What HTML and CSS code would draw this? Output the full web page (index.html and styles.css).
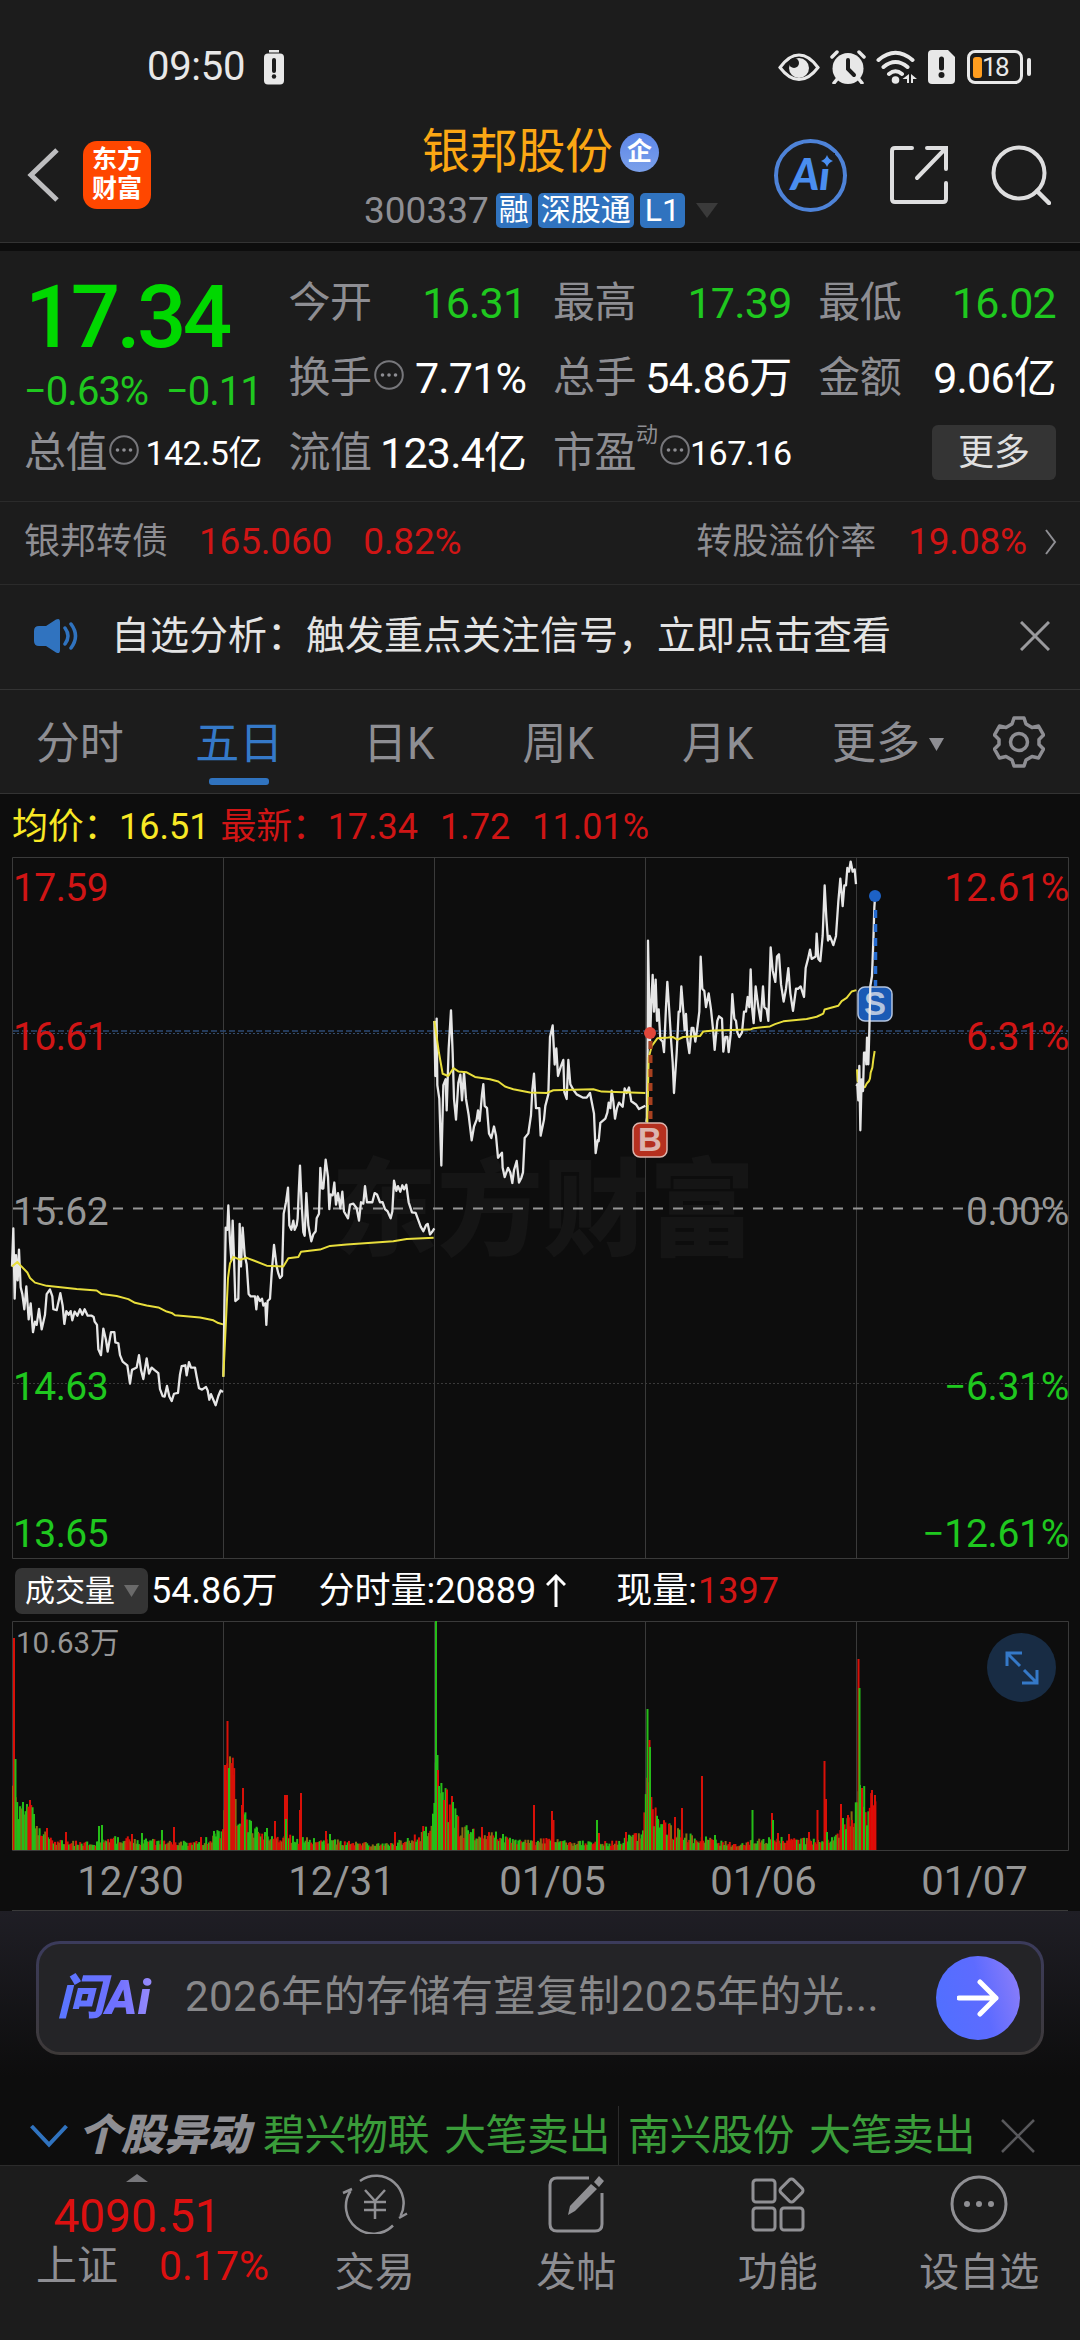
FILE: index.html
```
<!DOCTYPE html>
<html lang="zh-CN">
<head>
  <meta charset="UTF-8">
  <meta name="viewport" content="width=device-width, initial-scale=1.0">
  <title>银邦股份 300337</title>
  <link rel="stylesheet" href="styles.css">
</head>
<body>

  <header class="top">
    <div class="status-bar">
      <div class="status-left">
        <span class="clock">09:50</span>
        <svg width="20" height="35" viewBox="0 0 20 35">
          <rect x="5" y="0" width="10" height="2.5" fill="#e8e8e8"/>
          <rect x="0" y="3.5" width="20" height="31" rx="4" fill="#e8e8e8"/>
          <path d="M10 10v11" stroke="#1c1c1c" stroke-width="4" stroke-linecap="round"/>
          <circle cx="10" cy="26.5" r="2.2" fill="#1c1c1c"/>
        </svg>
      </div>
      <div class="status-right">
        <svg width="42" height="34" viewBox="0 0 42 34">
          <path d="M2 17.500Q11 5 21 5T40 17.500Q31 29.500 21 29.500T2 17.500Z" fill="none" stroke="#e8e8e8" stroke-width="3"/>
          <circle cx="21" cy="18" r="10" fill="#e8e8e8"/>
          <circle cx="16" cy="13" r="5" fill="#1c1c1c"/>
        </svg>
        <svg width="36" height="34" viewBox="0 0 36 34">
          <circle cx="18" cy="18.500" r="15.500" fill="#e8e8e8"/>
          <path d="M2 7l5-5M34 7l-5-5M4 33l4-5M32 33l-4-5" stroke="#e8e8e8" stroke-width="3.500" stroke-linecap="round"/>
          <path d="M18 10v9l6 6" fill="none" stroke="#1c1c1c" stroke-width="4" stroke-linecap="round"/>
        </svg>
        <svg width="42" height="34" viewBox="0 0 42 34">
          <path d="M2.500 10Q19.500-4.500 36.500 10M7.500 17Q19.500 7 31.500 17M13 24Q19.500 18.500 26 24" fill="none" stroke="#e8e8e8" stroke-width="4" stroke-linecap="round"/>
          <circle cx="19.500" cy="30" r="3.800" fill="#e8e8e8"/>
          <path d="M33 24v9h-2v-4h-4.500zM35 24l6 5h-4v4h-2z" fill="#e8e8e8"/>
        </svg>
        <svg width="27" height="34" viewBox="0 0 27 34">
          <path d="M4 0h16l7 7v23q0 4-4 4H4q-4 0-4-4V4q0-4 4-4z" fill="#e8e8e8"/>
          <path d="M13.500 9v9" stroke="#1c1c1c" stroke-width="5" stroke-linecap="round"/>
          <circle cx="13.500" cy="25" r="3" fill="#1c1c1c"/>
        </svg>
        <div class="battery"><i></i><span>18</span></div>
      </div>
    </div>

    <div class="nav-bar">
      <div class="nav-left">
        <svg width="34" height="56" viewBox="0 0 34 56">
          <path d="M32 3L6 28L32 53" fill="none" stroke="#bdbdbf" stroke-width="5"/>
        </svg>
        <div class="app-logo">东方<br>财富</div>
      </div>
      <div class="nav-title">
        <div class="stock-name">银邦股份<span class="corp">企</span></div>
        <div class="stock-code">
          <span class="code">300337</span>
          <span class="tag">融</span>
          <span class="tag">深股通</span>
          <span class="tag">L1</span>
          <svg width="22" height="15" viewBox="0 0 22 15"><path d="M0 0h22L11 15z" fill="#3a3a3a"/></svg>
        </div>
      </div>
      <div class="nav-right">
        <div class="ai-btn">Ai
          <svg width="12" height="12" viewBox="0 0 12 12"><path d="M6 0Q7.500 4.500 12 6Q7.500 7.500 6 12Q4.500 7.500 0 6Q4.500 4.500 6 0z" fill="#4a8ef0"/></svg>
        </div>
        <svg width="58" height="58" viewBox="0 0 58 58">
          <path d="M22 2H5Q2 2 2 5v48q0 3 3 3h48q3 0 3-3V37M37 2h19v21M55 3L27 32" fill="none" stroke="#dededf" stroke-width="4" stroke-linecap="round"/>
        </svg>
        <svg width="60" height="60" viewBox="0 0 60 60">
          <circle cx="28" cy="28" r="25.500" fill="none" stroke="#dededf" stroke-width="4"/>
          <path d="M46 46l12 12" stroke="#dededf" stroke-width="4.500" stroke-linecap="round"/>
        </svg>
      </div>
    </div>
  </header>

  <section class="quote">
    <div class="price-block">
      <div class="price">17.34</div>
      <div class="change"><span>−0.63%</span><span>−0.11</span></div>
    </div>
    <div class="cell"><label>今开</label><b class="green">16.31</b></div>
    <div class="cell"><label>最高</label><b class="green">17.39</b></div>
    <div class="cell"><label>最低</label><b class="green">16.02</b></div>
    <div class="cell"><label>换手</label><svg class="dots" width="30" height="30" viewBox="0 0 30 30"><use href="#dots"/></svg><b>7.71%</b></div>
    <div class="cell"><label>总手</label><b>54.86万</b></div>
    <div class="cell"><label>金额</label><b>9.06亿</b></div>
    <div class="cell"><label>总值</label><svg class="dots" width="30" height="30" viewBox="0 0 30 30"><use href="#dots"/></svg><b class="small">142.5亿</b></div>
    <div class="cell"><label>流值</label><b>123.4亿</b></div>
    <div class="cell"><label>市盈</label><sup>动</sup><svg class="dots" width="30" height="30" viewBox="0 0 30 30">
      <g id="dots">
        <circle cx="15" cy="15" r="13.800" fill="none" stroke="#77777b" stroke-width="2"/>
        <g fill="#8e8e93"><circle cx="8.500" cy="15" r="1.800"/><circle cx="15" cy="15" r="1.800"/><circle cx="21.500" cy="15" r="1.800"/></g>
      </g>
    </svg><b class="small">167.16</b></div>
    <div class="cell"><button class="more-btn">更多</button></div>
  </section>

  <section class="bond">
    <span class="bond-name">银邦转债</span>
    <span class="red bond-price">165.060</span>
    <span class="red">0.82%</span>
    <span class="premium">转股溢价率</span>
    <span class="red bond-rate">19.08%</span>
    <svg width="13" height="26" viewBox="0 0 13 26"><path d="M2 1l9 12L2 25" fill="none" stroke="#8e8e93" stroke-width="2"/></svg>
  </section>

  <section class="notice">
    <svg width="46" height="36" viewBox="0 0 46 36">
      <path d="M5 8h7L22 1.500Q26-.5 26 4v28q0 4.500-4 2.500L12 28H5q-5 0-5-5V13q0-5 5-5z" fill="#3073bf"/>
      <path d="M31 10q6 8 0 16M37 6q9 12 0 24" fill="none" stroke="#3073bf" stroke-width="3.500" stroke-linecap="round"/>
    </svg>
    <span class="notice-text">自选分析：触发重点关注信号，立即点击查看</span>
    <svg width="30" height="30" viewBox="0 0 30 30"><path d="M1 1l28 28M29 1L1 29" stroke="#9a9a9d" stroke-width="3"/></svg>
  </section>

  <nav class="tabs">
    <div class="tab">分时</div>
    <div class="tab active">五日</div>
    <div class="tab">日K</div>
    <div class="tab">周K</div>
    <div class="tab">月K</div>
    <div class="tab tab-more">更多<svg width="15" height="13" viewBox="0 0 15 13"><path d="M0 0h15L7.500 13z" fill="#8e8e93"/></svg></div>
    <div class="gear">
      <svg width="52" height="52" viewBox="0 0 52 52">
        <path d="M21 2h10l2 6l6 3.500l6.500-1.500l5 9l-4.500 4.500v5l4.500 4.500l-5 9l-6.500-1.500l-6 3.500l-2 6H21l-2-6l-6-3.500L6.500 42l-5-9L6 28.500v-5L1.500 19l5-9l6.500 1.500L19 8z" fill="none" stroke="#8e8e93" stroke-width="3.500" stroke-linejoin="round"/>
        <circle cx="26" cy="26" r="8.500" fill="none" stroke="#8e8e93" stroke-width="3.500"/>
      </svg>
    </div>
  </nav>

  <section class="avg-row">
    <span class="yellow avg-label">均价：</span><span class="yellow avg-val">16.51</span>
    <span class="red avg-label">最新：</span><span class="red now-val">17.34</span>
    <span class="red now-val">1.72</span><span class="red">11.01%</span>
  </section>

  <section class="chart">
    <svg class="price-chart" width="1080" height="702" viewBox="0 856 1080 702">
      <text class="watermark" x="543" y="1246" text-anchor="middle">东方财富</text>
      <path class="grid" d="M12.500 856.500H1068.500V1557.500H12.500zM223.500 857V1557M434.500 857V1557M645.500 857V1557M856.500 857V1557"/>
      <path d="M13 1382.500H1068" stroke="#3a3a3a" stroke-dasharray="2 2"/>
      <path d="M13 1030H1068" stroke="#2c4a73" stroke-width="1.600" stroke-dasharray="6 3"/>
      <path d="M13 1032.500H1068" stroke="#344d6c" stroke-dasharray="2 2"/>
      <path d="M13 1207.500H1068" stroke="#969696" stroke-width="2" stroke-dasharray="10 10"/>

      <!-- axis values -->
      <g class="axis">
        <text class="red-fill" x="13" y="899.500">17.59</text>
        <text class="red-fill" x="13" y="1048.500">16.61</text>
        <text class="grey-fill" x="13" y="1223.500">15.62</text>
        <text class="green-fill" x="13" y="1398.500">14.63</text>
        <text class="green-fill" x="13" y="1546">13.65</text>
      </g>
      <g class="axis axis-right" text-anchor="end">
        <text class="red-fill" x="1069" y="899.500">12.61%</text>
        <text class="red-fill" x="1069" y="1048.500">6.31%</text>
        <text class="grey-fill" x="1069" y="1223.500">0.00%</text>
        <text class="green-fill" x="1069" y="1398.500">−6.31%</text>
        <text class="green-fill" x="1069" y="1546">−12.61%</text>
      </g>

      <!-- 12/30, 12/31 -->
      <g transform="translate(0 850) scale(.33333 .45918)">
        <polyline class="line" points="36,905 40,822 44,975 48,880 53,935 57,868 62,950 67,965 73,998 79,948 86,1020 92,985 99,1048 105,1025 110,1032 117,997 125,1042 135,1010 140,965 150,955 157,970 160,998 170,1000 181,963 188,990 193,1030 199,1002 206,1010 212,1002 217,1022 224,1003 232,1012 240,998 247,1010 254,998 263,1012 275,1012 281,1015 284,1025 291,1032 295,1085 303,1098 310,1040 318,1065 323,1090 333,1048 343,1048 346,1070 355,1072 360,1098 368,1112 382,1120 390,1160 396,1130 410,1125 417,1098 423,1130 430,1150 440,1105 447,1138 455,1125 463,1130 475,1137 480,1172 488,1187 494,1188 501,1165 508,1188 515,1198 522,1182 534,1180 540,1140 545,1122 556,1120 560,1142 567,1113 573,1125 585,1125 590,1145 597,1170 606,1173 618,1167 623,1175 628,1195 633,1183 647,1207 655,1187 662,1175 669,1178"/>
        <polyline class="avg" points="36,905 52,895 62,903 82,918 90,930 105,940 140,947 230,954 290,957 305,965 350,969 385,976 405,984 440,990 475,994 500,1003 515,1006 525,1011 600,1016 640,1022 655,1028 669,1031"/>
        <polyline class="line" points="670,1145 677,820 682,825 685,772 690,850 694,890 698,805 702,885 706,980 715,975 719,812 723,905 728,820 734,880 740,900 746,965 752,970 765,970 769,998 773,970 780,980 786,975 790,990 796,985 799,1032 803,980 810,975 815,920 822,858 830,905 835,920 840,930 846,925 851,790 858,765 864,733 868,815 874,825 880,805 884,825 890,815 893,800 897,730 900,685 905,770 910,830 914,838 919,745 925,815 930,835 934,850 940,835 947,828 950,800 957,790 961,690 966,735 970,735 977,672 984,710 988,780 992,748 998,750 1003,722 1008,770 1014,745 1021,778 1027,742 1032,785 1044,800 1050,770 1060,768 1070,778 1077,805 1083,765 1090,768 1095,730 1101,765 1117,765 1124,745 1131,748 1140,765 1148,765 1155,780 1163,785 1172,800 1177,785 1182,718 1189,740 1194,730 1201,742 1207,728 1212,737 1219,727 1226,765 1236,787 1247,788 1253,800 1262,818 1270,828 1278,815 1283,812 1290,835 1296,830 1303,822"/>
        <polyline class="avg" points="670,1145 684,930 690,898 700,884 720,890 740,886 765,893 800,903 850,905 865,887 895,884 903,873 960,868 990,860 1040,857 1180,850 1220,845 1301,842"/>
      </g>

      <!-- 01/05, 01/06 -->
      <g transform="translate(420 850) scale(.33333 .45918)">
        <polyline class="line" points="43,370 46,490 50,365 52,510 58,540 64,685 70,510 77,497 80,565 86,430 93,347 98,440 102,540 108,585 115,505 121,487 126,543 132,482 138,540 146,575 155,630 162,600 170,585 174,565 179,588 186,530 190,508 194,555 201,560 207,615 214,625 222,600 228,620 234,668 246,657 248,690 254,710 264,690 271,700 277,723 282,695 290,675 297,722 304,712 309,700 314,625 325,615 333,575 337,520 342,485 348,560 358,560 362,620 372,585 376,555 385,530 390,405 398,380 404,465 409,430 414,490 422,470 430,455 433,525 440,540 445,455 451,508 460,520 470,530 488,537 500,537 510,527 522,572 527,658 533,630 536,632 541,592 556,583 562,570 566,548 571,560 575,522 580,545 585,583 591,560 597,548 608,557 614,517 620,527 627,515 634,545 648,552 657,562 676,555"/>
        <polyline class="avg" points="43,370 57,440 68,485 85,490 100,473 115,480 140,482 165,492 210,497 235,502 255,513 280,519 330,526 380,527 400,521 520,519 545,524 676,527"/>
        <polyline class="line" points="679,590 681,580 683,430 684,195 690,415 694,330 698,270 702,350 707,280 711,370 716,345 721,410 728,415 732,438 738,340 742,285 748,350 754,420 758,460 762,527 770,440 776,350 780,350 784,295 790,350 794,390 798,355 802,410 808,440 815,385 820,385 826,415 832,385 838,350 842,230 847,300 853,305 858,340 866,310 873,345 880,395 884,433 892,370 897,360 906,365 910,437 916,405 922,405 926,438 932,400 937,312 943,365 948,370 952,395 958,405 966,395 972,350 978,350 983,318 988,340 992,258 996,340 1001,375 1007,295 1015,340 1022,370 1029,295 1033,340 1040,345 1045,370 1052,210 1058,260 1066,285 1071,230 1077,225 1083,290 1091,328 1098,300 1105,255 1111,310 1119,348 1128,300 1134,300 1142,295 1152,318 1157,255 1164,235 1170,215 1175,235 1187,230 1190,180 1195,235 1201,240 1208,185 1214,75 1219,145 1224,195 1229,185 1235,195 1240,205 1248,185 1255,110 1261,60 1268,120 1273,75 1278,75 1282,37 1287,45 1292,23 1298,45 1304,40 1308,72"/>
        <polyline class="avg" points="681,625 686,450 695,425 712,408 745,406 758,405 772,411 790,405 840,403 850,393 880,391 990,389 1000,386 1050,382 1065,377 1090,371 1160,366 1190,361 1210,354 1214,345 1255,337 1265,327 1280,320 1295,306 1309,303"/>
      </g>

      <!-- buy / sell marks -->
      <path d="M650.500 1040V1122" stroke="#a8401f" stroke-width="4" stroke-dasharray="8 6"/>
      <circle cx="650" cy="1032" r="6" fill="#e0473a"/>
      <rect x="633" y="1122" width="34" height="34" rx="7" fill="#b5301f" stroke="#dcb5ae" stroke-width="1.500"/>
      <text class="mark" x="650" y="1150" text-anchor="middle" fill="#dcb5ae">B</text>

      <rect x="858" y="986" width="34" height="34" rx="7" fill="#1b5ab5" stroke="#b4c4de" stroke-width="1.500"/>
      <text class="mark" x="875" y="1014" text-anchor="middle" fill="#b4c4de">S</text>

      <!-- 01/07 -->
      <g transform="translate(840 850) scale(.33333)">
        <polyline class="avg" points="51,655 53,690 66,710 75,708 80,698 87,690 90,682 92,665 97,650 100,625 104,600"/>
        <polyline class="line" points="49,705 52,700 55,748 58,645 61,838 65,685 69,720 72,605 77,605 79,640 81,560 85,640 88,540 91,405 96,375 100,270 103,170 105,140"/>
      </g>
      <path d="M875.500 909V985" stroke="#256bd0" stroke-width="3.500" stroke-dasharray="8 6"/>
      <circle cx="875" cy="895" r="6" fill="#1d62c6"/>
    </svg>

    <div class="vol-head">
      <span class="vol-select">成交量<svg width="15" height="12" viewBox="0 0 15 12"><path d="M0 0h15L7.500 12z" fill="#6a6a6a"/></svg></span>
      <span class="vol-total">54.86万</span>
      <span class="vol-min">分时量:20889</span>
      <svg class="vol-arrow" width="20" height="34" viewBox="0 0 20 34"><path d="M10 33V2M1 11l9-9l9 9" fill="none" stroke="#fff" stroke-width="3"/></svg>
      <span>现量:</span><span class="red vol-now">1397</span>
    </div>

    <div class="vol-box">
      <svg id="volume" width="1080" height="232" viewBox="0 1619 1080 232">
        <path class="grid" d="M12.500 1620.500H1068.500V1849.500H12.500zM223.500 1620V1849M434.500 1620V1849M645.500 1620V1849M856.500 1620V1849"/>
        <text class="vol-max" x="16" y="1652">10.63万</text>
      </svg>
      <div class="expand">
        <svg width="34" height="34" viewBox="0 0 34 34">
          <path d="M2 15V2h15M2 2l13 13M32 19v13H17M32 32L19 19" fill="none" stroke="#3579c8" stroke-width="3"/>
        </svg>
      </div>
    </div>

    <div class="dates">
      <span>12/30</span><span>12/31</span><span>01/05</span><span>01/06</span><span>01/07</span>
    </div>
  </section>

  <section class="ask">
    <div class="ask-card">
      <div class="ask-inner">
        <span class="ask-logo">问Ai</span>
        <span class="ask-text">2026年的存储有望复制2025年的光...</span>
        <span class="ask-go">
          <svg width="42" height="38" viewBox="0 0 42 38"><path d="M2 19h37M23 3l16 16l-16 16" fill="none" stroke="#fff" stroke-width="5" stroke-linecap="round" stroke-linejoin="round"/></svg>
        </span>
      </div>
    </div>
  </section>

  <section class="ticker">
    <svg class="ticker-open" width="38" height="24" viewBox="0 0 38 24"><path d="M1.500 2L19 20.500L36.500 2" fill="none" stroke="#3073bf" stroke-width="4"/></svg>
    <span class="ticker-name">个股异动</span>
    <span class="ticker-item"><span>碧兴物联</span><span>大笔卖出</span></span>
    <span class="ticker-item"><span>南兴股份</span><span>大笔卖出</span></span>
    <svg width="34" height="34" viewBox="0 0 34 34"><path d="M1 1l32 32M33 1L1 33" stroke="#58585b" stroke-width="2.500"/></svg>
  </section>

  <footer class="bottom">
    <div class="index">
      <svg width="22" height="8" viewBox="0 0 22 8"><path d="M0 8L11 0l11 8z" fill="#77777b"/></svg>
      <div class="index-value">4090.51</div>
      <div class="index-row"><span>上证</span><span class="index-pct">0.17%</span></div>
    </div>
    <div class="item">
      <svg width="66" height="60" viewBox="0 0 66 60">
        <path d="M18 7A27.500 27.500 0 0 1 58.500 42M51 51.500A27.500 27.500 0 0 1 8.500 17M1 19l9-4M65 39.500l-8 4.500" fill="none" stroke="#909094" stroke-width="2.500"/>
        <path d="M23 16l10 11l10-11M33 27v18M22 28h22M22 36h22" fill="none" stroke="#909094" stroke-width="2.500"/>
      </svg>
      <span>交易</span>
    </div>
    <div class="item">
      <svg width="56" height="60" viewBox="0 0 56 60">
        <path d="M41 4H9Q2 4 2 11v39q0 7 7 7h38q7 0 7-7V19" fill="none" stroke="#909094" stroke-width="3"/>
        <path d="M20 41l2-9L43 10l6 5L27 37zM46 8l5-6l5 5l-5 6z" fill="#909094"/>
      </svg>
      <span>发帖</span>
    </div>
    <div class="item">
      <svg width="56" height="60" viewBox="0 0 56 60">
        <g fill="none" stroke="#909094" stroke-width="3">
          <rect x="3" y="6" width="22" height="22" rx="3"/>
          <rect x="3" y="34" width="22" height="22" rx="3"/>
          <rect x="31" y="34" width="22" height="22" rx="3"/>
          <rect x="32.500" y="7.500" width="18" height="18" rx="3" transform="rotate(45 41.500 16.500)"/>
        </g>
      </svg>
      <span>功能</span>
    </div>
    <div class="item">
      <svg width="60" height="60" viewBox="0 0 60 60">
        <circle cx="30" cy="30" r="27" fill="none" stroke="#909094" stroke-width="3"/>
        <g fill="#909094"><circle cx="18" cy="30" r="3"/><circle cx="30" cy="30" r="3"/><circle cx="42" cy="30" r="3"/></g>
      </svg>
      <span>设自选</span>
    </div>
  </footer>

  <script src="volume.js"></script>
</body>
</html>
```

FILE: styles.css
```
* {
  box-sizing: border-box;
}

body {
  margin: 0;
  width: 1080px;
  height: 2340px;
  overflow: hidden;
  background-color: #0d0d0d;
  color: #fff;
  font-family: Roboto, "Noto Sans CJK SC", sans-serif;
  display: flex;
  flex-direction: column;
}

svg {
  display: block;
  flex-shrink: 0;
}

section, nav, footer, header {
  flex-shrink: 0;
}

.red { color: #d01515; }
.green { color: #1fc81f; }
.yellow { color: #f8e825; }

/* header */
.top {
  height: 243px;
  background-color: #1c1c1c;
  border-bottom: 1px solid #333;
}

.status-bar {
  height: 108px;
  padding: 26px 49px 0 147px;
  display: flex;
  justify-content: space-between;
  align-items: center;
}

.status-left {
  display: flex;
  align-items: center;
  gap: 19px;
}

.clock {
  font-size: 40px;
  line-height: 40px;
  color: #e8e8e8;
  letter-spacing: -0.3px;
}

.status-right {
  display: flex;
  align-items: center;
  gap: 10px;
}

.battery {
  position: relative;
  width: 56px;
  height: 34px;
  margin: 0 8px 0 2px;
  border: 3px solid #e8e8e8;
  border-radius: 8px;
  display: flex;
  align-items: center;
  padding-left: 3px;
  color: #e8e8e8;
  font-size: 26px;
  line-height: 26px;
  letter-spacing: -1.5px;
}

.battery i {
  width: 9px;
  height: 21px;
  border-radius: 3px;
  background-color: #ff9d1f;
}

.battery::after {
  content: "";
  position: absolute;
  right: -11px;
  top: 5px;
  width: 4px;
  height: 18px;
  border-radius: 2px;
  background-color: #e8e8e8;
}

.nav-bar {
  height: 134px;
  padding: 0 29px 0 25px;
  display: grid;
  grid-template-columns: 339px 1fr 278px;
}

.nav-left {
  display: flex;
  align-items: center;
  gap: 24px;
}

.app-logo {
  width: 68px;
  height: 68px;
  border-radius: 14px;
  background-color: #ff4700;
  font-size: 25px;
  line-height: 29px;
  font-weight: 700;
  text-align: center;
  padding-top: 4px;
}

.nav-title {
  display: flex;
  flex-direction: column;
  padding-top: 14px;
}

.stock-name {
  display: flex;
  align-items: center;
  padding-left: 58px;
  height: 60px;
  gap: 7px;
  font-size: 48px;
  line-height: 60px;
  letter-spacing: -0.3px;
  color: #fba714;
}

.corp {
  width: 39px;
  height: 39px;
  border-radius: 50%;
  background: linear-gradient(#5c86e8, #7ba0ea);
  color: #fff;
  font-size: 25px;
  line-height: 37px;
  font-weight: 700;
  text-align: center;
}

.stock-code {
  display: flex;
  align-items: center;
  height: 56px;
  gap: 6px;
}

.code {
  font-size: 37px;
  color: #8e8e93;
  margin-right: 1px;
}

.tag {
  height: 35px;
  padding: 0 3px;
  border-radius: 5px;
  background-color: #3073bf;
  font-size: 30px;
  line-height: 34px;
}

.tag:nth-of-type(4) {
  padding: 0 5px;
  font-size: 32px;
  margin-right: 5px;
}

.nav-right {
  display: flex;
  align-items: center;
  justify-content: flex-end;
  gap: 43px;
}

.ai-btn {
  position: relative;
  width: 73px;
  height: 73px;
  border: 4px solid #4e83d8;
  border-radius: 50%;
  color: #4a8ef0;
  font-family: Lato, sans-serif;
  font-size: 43px;
  line-height: 62px;
  font-weight: 900;
  font-style: italic;
  text-align: center;
}

.ai-btn svg {
  position: absolute;
  right: 10px;
  top: 12px;
  outline: 2px solid #1c1c1c;
  background-color: #1c1c1c;
}

/* quote */
.quote {
  margin-top: 8px;
  height: 251px;
  padding: 14px 24px 0;
  background-color: #1c1c1c;
  border-bottom: 1px solid #2b2b2b;
  display: grid;
  grid-template-columns: repeat(4, 1fr);
  grid-auto-rows: 75px;
  column-gap: 26.7px;
}

.price-block {
  grid-row: span 2;
}

.price {
  height: 104px;
  padding-left: 1px;
  font-size: 87px;
  line-height: 104px;
  font-weight: 500;
  letter-spacing: -3.7px;
  color: #00d800;
}

.change {
  display: flex;
  justify-content: space-between;
  font-size: 40px;
  line-height: 45px;
  letter-spacing: -1px;
  color: #1fc81f;
}

.cell {
  display: flex;
  align-items: center;
  font-size: 42px;
  line-height: 60px;
  white-space: nowrap;
}

.cell label {
  color: #8e8e93;
  letter-spacing: -0.5px;
}

.cell b {
  margin-left: auto;
  font-weight: 400;
  font-size: 43px;
  letter-spacing: -0.8px;
}

.cell .small {
  font-size: 34px;
  letter-spacing: -0.5px;
}

.cell sup {
  align-self: flex-start;
  font-size: 22px;
  line-height: 40px;
  color: #8e8e93;
}

.dots {
  margin: 0 0 6px 2px;
}

.more-btn {
  margin-left: auto;
  width: 124px;
  height: 55px;
  padding: 0;
  border: none;
  border-radius: 6px;
  background-color: #343434;
  color: #e0e0e0;
  font-family: inherit;
  font-size: 36px;
  line-height: 50px;
}

.bond {
  height: 83px;
  padding: 0 23px 2px 24px;
  background-color: #1c1c1c;
  border-bottom: 1px solid #2b2b2b;
  display: flex;
  align-items: center;
  font-size: 37px;
  line-height: 50px;
  letter-spacing: -0.2px;
}

.bond-name,
.premium {
  color: #8e8e93;
  font-size: 36px;
  letter-spacing: 0;
}

.bond-price {
  margin: 0 31px;
}

.premium {
  margin-left: auto;
}

.bond-rate {
  margin: 0 17px 0 32px;
}

/* notice */
.notice {
  height: 105px;
  padding: 0 30px 2px 34px;
  background-color: #1c1c1c;
  border-bottom: 1px solid #333;
  display: flex;
  align-items: center;
}

.notice-text {
  margin: 0 auto 0 31px;
  font-size: 39px;
  line-height: 54px;
  color: #e4e4e4;
}

/* period tabs */
.tabs {
  height: 104px;
  background-color: #1c1c1c;
  border-bottom: 1px solid #333;
  display: grid;
  grid-template-columns: repeat(6, 159.500px) 1fr;
}

.tab {
  padding-top: 5px;
  font-size: 44px;
  line-height: 98px;
  color: #8e8e93;
  text-align: center;
}

.active {
  position: relative;
  color: #3579c8;
}

.active::after {
  content: "";
  position: absolute;
  left: 49px;
  bottom: 8px;
  width: 60px;
  height: 7px;
  border-radius: 3px;
  background-color: #3073bf;
}

.tab-more {
  display: flex;
  align-items: center;
  justify-content: flex-end;
  padding-right: 13px;
  gap: 9px;
}

.gear {
  display: flex;
  align-items: center;
  justify-content: center;
}

.avg-row {
  height: 63px;
  padding: 2px 0 0 12px;
  display: flex;
  align-items: center;
  font-size: 36px;
  line-height: 50px;
}

.avg-label {
  letter-spacing: -0.3px;
}

.avg-val {
  margin-right: 11px;
}

.now-val {
  margin-right: 22px;
}

/* chart */
.chart {
  height: 1054px;
}

.grid {
  fill: none;
  stroke: #3a3a3a;
  stroke-width: 1;
}

.line,
.avg {
  fill: none;
  stroke: #e6e6e6;
  stroke-width: 2.3;
  stroke-linejoin: round;
  vector-effect: non-scaling-stroke;
}

.avg {
  stroke: #e8de3c;
  stroke-width: 2;
}

.axis text {
  font-size: 39px;
  letter-spacing: -0.6px;
}

.axis-right text {
  letter-spacing: -0.3px;
}

.red-fill { fill: #d01515; }
.green-fill { fill: #1fc81f; }
.grey-fill { fill: #969696; }

.watermark {
  font-family: "Noto Sans CJK SC", sans-serif;
  font-size: 106px;
  font-weight: 900;
  fill: #151515;
}

.mark {
  font-family: "Liberation Sans", sans-serif;
  font-size: 33px;
  font-weight: 700;
}

.vol-head {
  height: 61px;
  padding: 2px 0 0 15px;
  display: flex;
  align-items: center;
  font-size: 36px;
  line-height: 46px;
}

.vol-select {
  width: 133px;
  height: 46px;
  padding-left: 10px;
  border-radius: 7px;
  background-color: #343434;
  font-size: 30px;
  display: flex;
  align-items: center;
  gap: 9px;
}

.vol-total {
  margin: 0 41px 0 3px;
}

.vol-arrow {
  margin: 0 50px 0 10px;
}

.vol-now {
  margin-left: 1px;
}

.vol-box {
  position: relative;
}

.vol-max {
  font-size: 29.500px;
  fill: #969696;
}

.expand {
  position: absolute;
  left: 987px;
  top: 13px;
  width: 69px;
  height: 69px;
  border-radius: 50%;
  background-color: #182c44;
  display: flex;
  align-items: center;
  justify-content: center;
}

.dates {
  margin-left: 12px;
  width: 1056px;
  height: 59px;
  padding-left: 13px;
  border-bottom: 1px solid #3a3a3a;
  display: grid;
  grid-template-columns: repeat(5, 211px);
  font-size: 40px;
  line-height: 60px;
  color: #969696;
  text-align: center;
}

/* ask ai */
.ask {
  height: 195px;
  padding: 30px 36px 0;
  background: linear-gradient(#1f1e25, #0d0d0d 85%);
}

.ask-card {
  height: 114px;
  padding: 3px;
  border-radius: 24px;
  background: linear-gradient(#3b3b5c, #3d3938);
}

.ask-inner {
  height: 108px;
  padding: 0 21px 0 18px;
  border-radius: 21px;
  background-color: #242427;
  display: flex;
  align-items: center;
}

.ask-logo {
  width: 108px;
  font-size: 48px;
  line-height: 60px;
  font-weight: 900;
  font-style: italic;
  letter-spacing: 0.5px;
  background: linear-gradient(90deg, #5876ff, #6f70ff 55%, #a694f8);
  background-clip: text;
  -webkit-background-clip: text;
  color: transparent;
}

.ask-text {
  margin: 0 auto 3px 20px;
  font-size: 42px;
  line-height: 60px;
  letter-spacing: 0.45px;
  color: #88888a;
}

.ask-go {
  width: 84px;
  height: 84px;
  border-radius: 50%;
  background: linear-gradient(75deg, #4f70ff, #5d6bff 55%, #9180f8);
  display: flex;
  align-items: center;
  justify-content: center;
}

/* moving stocks */
.ticker {
  height: 59px;
  padding-left: 30px;
  display: flex;
  align-items: center;
  font-size: 42px;
  line-height: 59px;
  white-space: nowrap;
}

.ticker-name {
  width: 185px;
  margin-left: 10px;
  font-size: 43px;
  font-weight: 900;
  font-style: italic;
  color: #8e8e93;
}

.ticker-item {
  width: 356px;
  height: 59px;
  border-right: 1px solid #2b2b2b;
  display: flex;
  gap: 15px;
  letter-spacing: -0.5px;
  color: #3a9c3a;
}

.ticker-item + .ticker-item {
  width: 382px;
  padding-left: 9px;
  border: none;
}

/* bottom bar */
.bottom {
  height: 176px;
  background-color: #1c1c1c;
  border-top: 1px solid #2b2b2b;
  display: grid;
  grid-template-columns: 274px repeat(4, 201.500px);
}

.index {
  display: flex;
  flex-direction: column;
  align-items: center;
  padding-top: 8px;
}

.index-value {
  margin-top: 7px;
  font-size: 46px;
  line-height: 54px;
  color: #dc1010;
}

.index-row {
  width: 100%;
  padding: 0 4px 0 36px;
  display: flex;
  gap: 41px;
  font-size: 41px;
  line-height: 46px;
  color: #8e8e93;
}

.index-pct {
  color: #dc1010;
}

.item {
  padding-top: 8px;
  display: flex;
  flex-direction: column;
  align-items: center;
  gap: 11px;
  font-size: 40px;
  line-height: 56px;
  color: #8e8e93;
}
```

FILE: volume.js
```
const svg = document.getElementById('volume');
const base = 1849;

// [x, height] turning points of the ordinary minute volume
const envelope = [
  [12, 50], [20, 38], [32, 34], [36, 18], [50, 12], [56, 8], [95, 6], [105, 9], [125, 13],
  [140, 9], [172, 7], [200, 7], [213, 14], [222, 22], [224, 85], [232, 72], [236, 35], [250, 24],
  [262, 14], [280, 12], [310, 10], [335, 8], [385, 5], [395, 7], [415, 12], [424, 20], [430, 28],
  [434, 80], [440, 62], [452, 42], [458, 24], [480, 14], [500, 14], [520, 8], [545, 9], [575, 7],
  [620, 7], [640, 18], [645, 60], [652, 40], [662, 24], [680, 15], [700, 11], [735, 5], [752, 9],
  [775, 10], [800, 9], [830, 10], [845, 22], [855, 40], [862, 60], [866, 30], [872, 50], [875, 46]
];

// [x, height, colour] single large trades
const spikes = [
  [13, 212, 'r'], [14.500, 91, 'g'], [22, 48, 'g'], [29, 50, 'r'], [33, 36, 'g'], [46, 22, 'r'],
  [65, 18, 'r'], [98, 24, 'g'], [101, 25, 'g'], [131, 16, 'r'], [141, 17, 'g'], [161, 20, 'g'],
  [173, 23, 'r'], [200, 13, 'r'], [213, 19, 'g'], [224, 85, 'r'], [226.500, 129, 'r'], [228, 82, 'g'],
  [233, 75, 'r'], [242, 62, 'r'], [241, 45, 'r'], [256, 22, 'g'], [266, 22, 'g'], [274, 29, 'r'],
  [284, 55, 'r'], [286, 55, 'r'], [285, 31, 'g'], [300, 57, 'r'], [299, 40, 'r'], [325, 19, 'r'],
  [329, 16, 'g'], [394, 18, 'r'], [423, 19, 'g'], [435, 229, 'g'], [436.500, 95, 'g'], [437, 80, 'r'],
  [438, 64, 'g'], [443, 50, 'r'], [451, 54, 'r'], [452, 48, 'g'], [472, 21, 'g'], [481, 23, 'r'],
  [502, 16, 'g'], [533, 45, 'r'], [551, 39, 'r'], [552.500, 30, 'r'], [596, 30, 'g'], [598, 17, 'r'],
  [625, 18, 'r'], [646.500, 141, 'g'], [648.500, 110, 'r'], [649, 103, 'g'], [657, 31, 'g'], [668, 26, 'r'],
  [674, 33, 'r'], [681, 42, 'r'], [701, 74, 'r'], [714, 15, 'g'], [751.500, 40, 'g'], [771, 37, 'r'],
  [772, 30, 'g'], [777, 17, 'r'], [788, 16, 'r'], [808, 18, 'r'], [816.500, 40, 'r'], [823.500, 89, 'r'],
  [825, 51, 'r'], [826, 18, 'g'], [840, 46, 'r'], [842, 32, 'g'], [847, 35, 'r'], [851, 30, 'r'],
  [857.500, 191, 'r'], [858.500, 162, 'g'], [861, 62, 'r'], [863, 43, 'g'], [871, 60, 'r'], [874, 55, 'r']
];

let seed = 7;
function random() {
  seed = (seed * 16807) % 2147483647;
  return seed / 2147483647;
}

function level(x) {
  for (let i = 1; i < envelope.length; i++) {
    const [x0, h0] = envelope[i - 1];
    const [x1, h1] = envelope[i];
    if (x <= x1) {
      return h0 + (h1 - h0) * (x - x0) / (x1 - x0);
    }
  }
  return 0;
}

function bar(x, height, colour) {
  const rect = document.createElementNS('http://www.w3.org/2000/svg', 'rect');
  rect.setAttribute('x', x);
  rect.setAttribute('y', base - height);
  rect.setAttribute('width', 2);
  rect.setAttribute('height', height);
  rect.setAttribute('fill', colour);
  svg.appendChild(rect);
}

const colours = { r: '#d81008', g: '#25bd18' };

for (let x = 12; x < 875; x += 1.4) {
  const mixed = random() < 0.25 ? '#8a6a10' : (random() < 0.5 ? colours.r : colours.g);
  bar(x, level(x) * (0.55 + random() * 0.8), x > 868 ? '#e80404' : mixed);
}

for (const [x, height, c] of spikes) {
  bar(x, height, colours[c]);
}
```
